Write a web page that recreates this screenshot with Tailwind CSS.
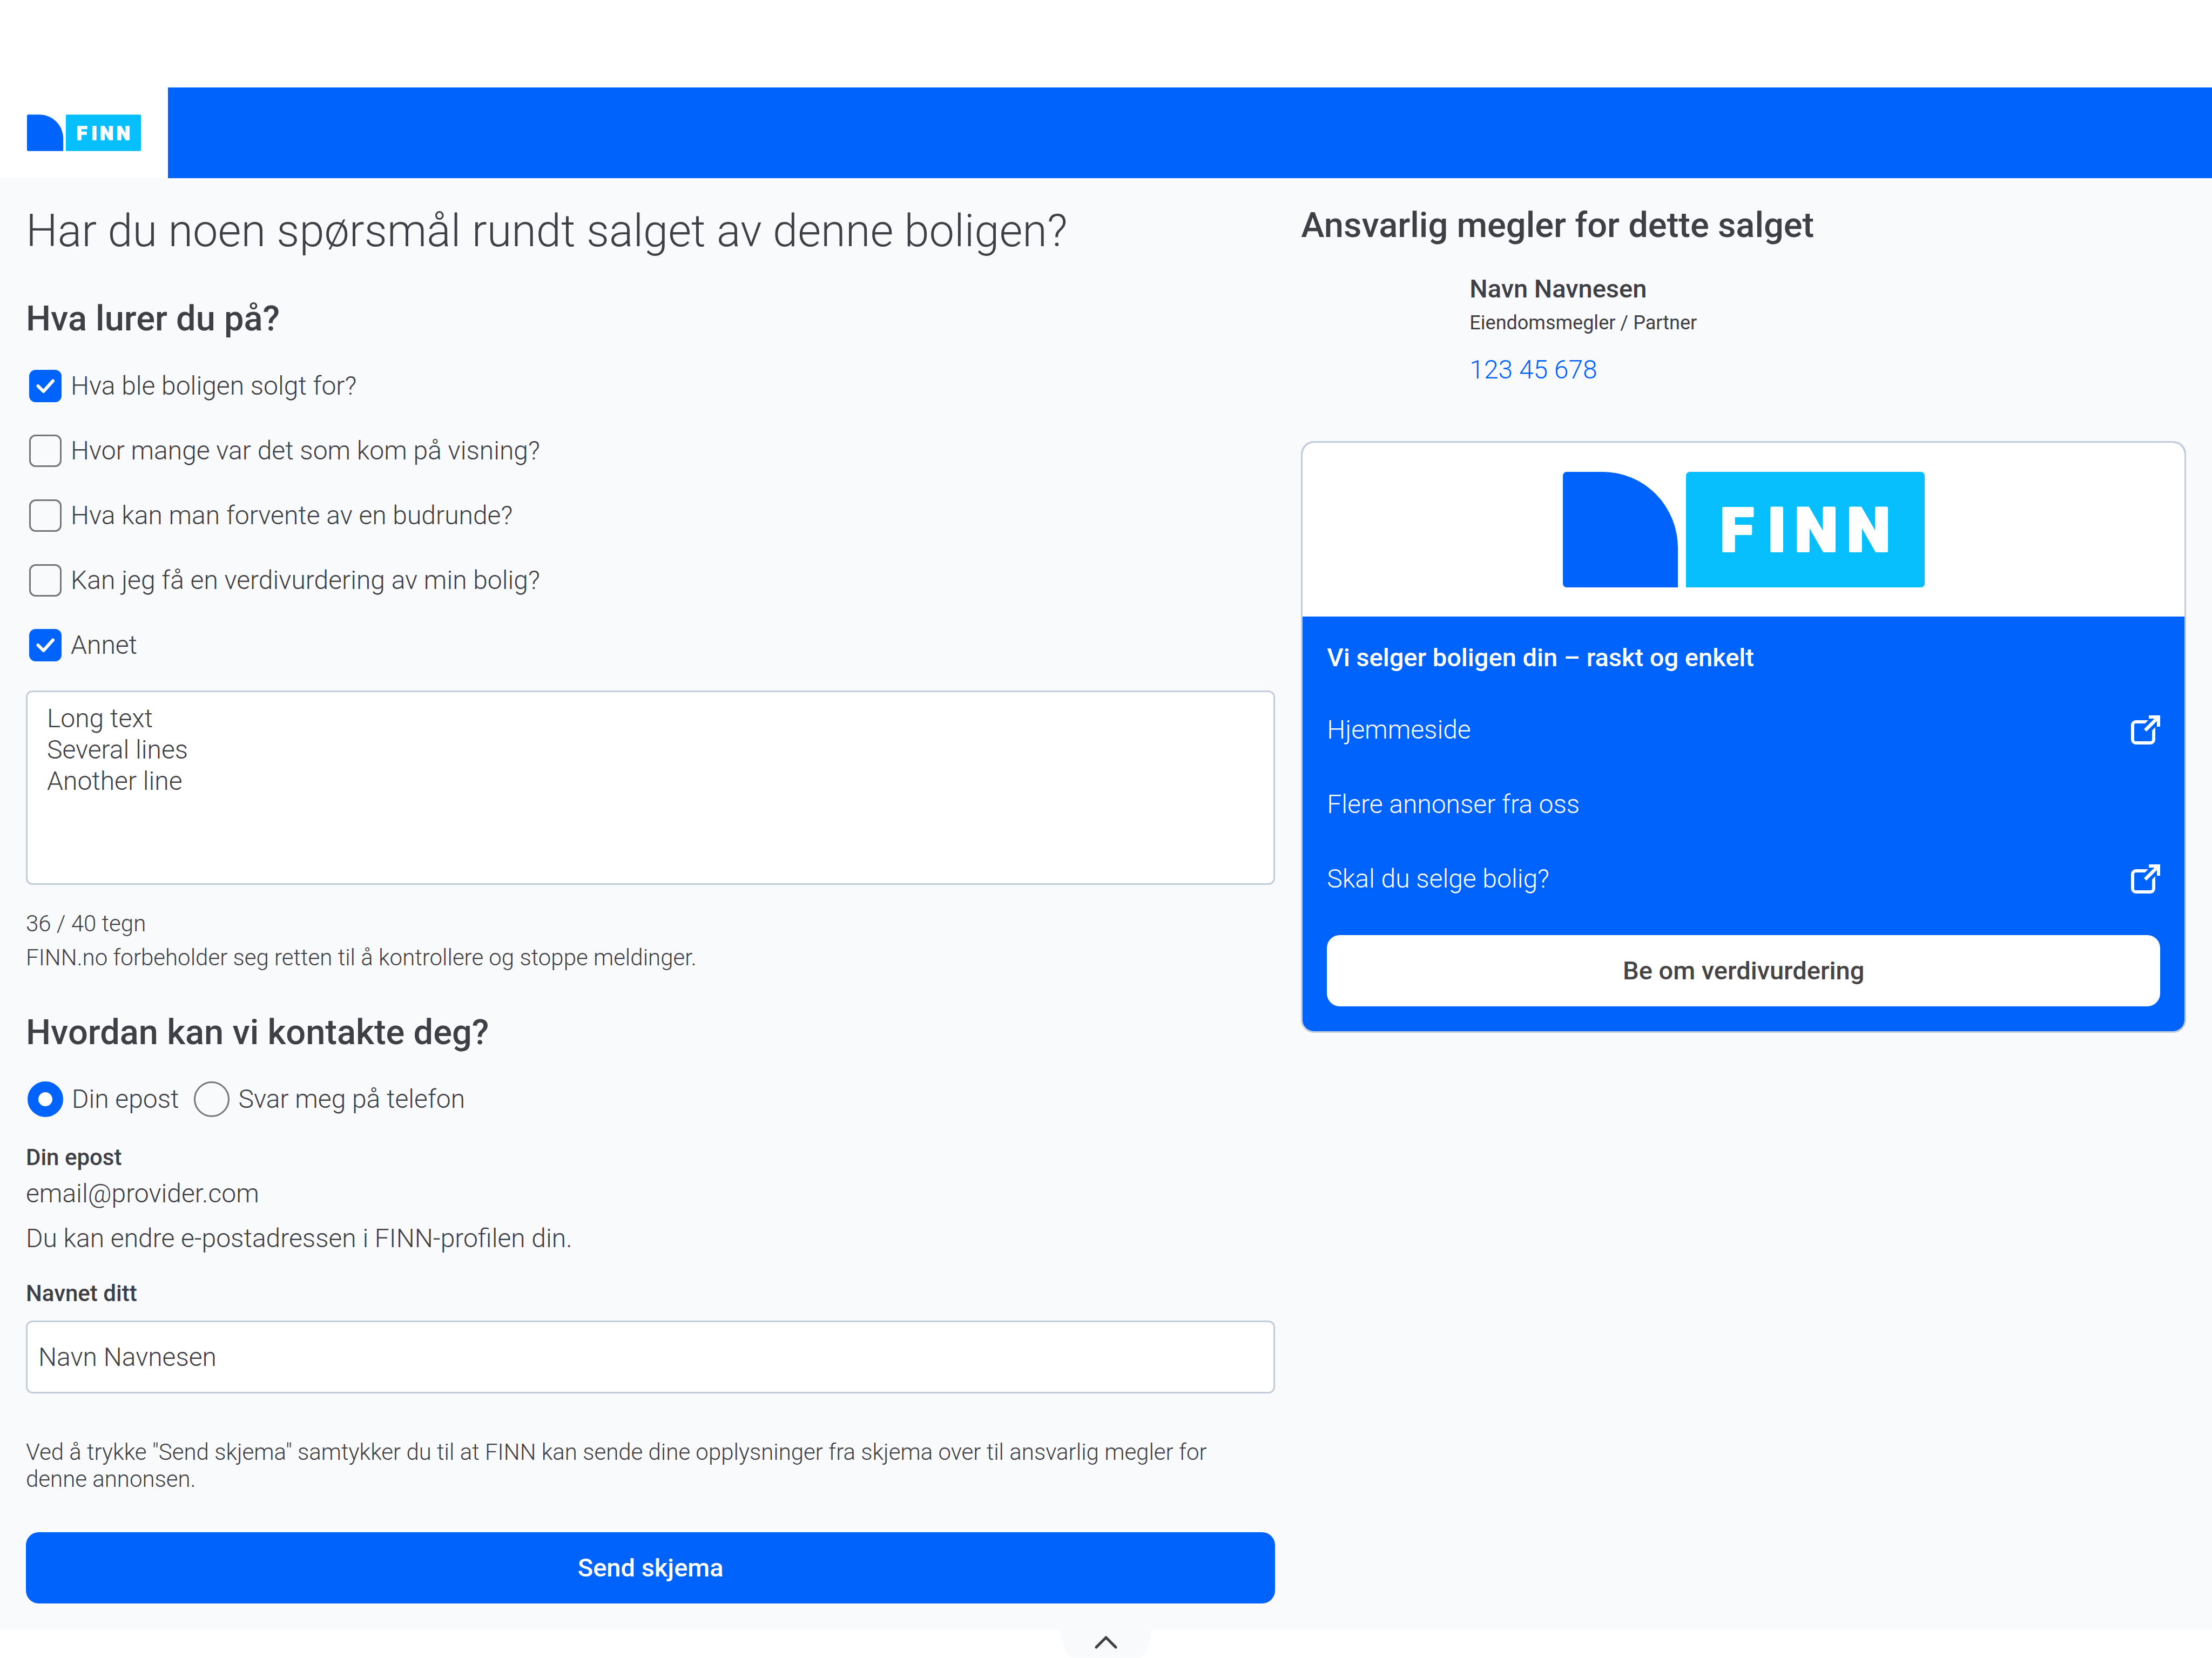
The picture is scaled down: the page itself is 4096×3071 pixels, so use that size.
<!DOCTYPE html>
<html lang="no">
<head>
<meta charset="utf-8">
<meta name="viewport" content="width=device-width, initial-scale=1">
<title>FINN – Kontakt megler</title>
<script src="https://cdn.jsdelivr.net/npm/@tailwindcss/browser@4"></script>
</head>
<body class="flex min-h-screen flex-col bg-white pt-[162px] font-['Roboto',sans-serif] text-[48px] leading-[72px] font-light text-[#3f4046]">

<svg class="hidden" aria-hidden="true">
  <symbol id="logo" viewBox="0 0 670 214">
    <path fill="#0063fb" d="M7 0H74A139 141 0 0 1 213 141V214H7A7 7 0 0 1 0 207V7A7 7 0 0 1 7 0Z"/>
    <path fill="#06bffc" d="M235 0H663A7 7 0 0 1 670 7V207A7 7 0 0 1 663 214H228V7A7 7 0 0 1 235 0Z"/>
    <text x="291 379 429 526" y="147" fill="#fff" stroke="#fff" stroke-width="4" stroke-linejoin="round" font-family="Roboto, sans-serif" font-weight="900" font-size="114">FINN</text>
  </symbol>
  <symbol id="external" viewBox="0 0 54 54">
    <path d="M32 9H9A9 9 0 0 0 0 18V45A9 9 0 0 0 9 54H36A9 9 0 0 0 45 45V22L39 28V45A3 3 0 0 1 36 48H9A3 3 0 0 1 6 45V18A3 3 0 0 1 9 15H26Z"/>
    <path d="M33 0H54V21H48V10.5L28.5 30L24 25.5L43.5 6H33Z"/>
  </symbol>
</svg>

<header class="flex h-[168px] bg-[#0063fb]">
  <a href="#" aria-label="FINN" class="flex items-center bg-white px-[50px]">
    <svg class="h-[68px] w-[211px]"><use href="#logo"/></svg>
  </a>
</header>

<main class="grid grid-cols-12 gap-12 bg-[#f9fafc] px-12 py-12">
  <form class="col-span-7 flex flex-col">
    <h1 class="text-[83px] leading-[100px]">Har du noen spørsmål rundt salget av denne boligen?</h1>

    <h2 class="mt-[73px] text-[65px] leading-[78px] font-medium">Hva lurer du på?</h2>
    <div class="mt-14 flex flex-col gap-15 pl-[6px] leading-[60px]">
      <label class="flex items-center gap-[17px]">
        <span class="relative flex">
          <input type="checkbox" checked class="peer size-15 appearance-none rounded-xl border-3 border-[#767676] checked:border-[#0063fb] checked:bg-[#0063fb]">
          <svg class="pointer-events-none absolute inset-0 hidden size-15 peer-checked:block" viewBox="0 0 60 60" fill="none" stroke="#fff" stroke-width="6" stroke-linecap="round" stroke-linejoin="round"><path d="M16.500 30L26.500 40L44 20.500"/></svg>
        </span>
        Hva ble boligen solgt for?
      </label>
      <label class="flex items-center gap-[17px]">
        <input type="checkbox" class="size-15 appearance-none rounded-xl border-3 border-[#767676]">
        Hvor mange var det som kom på visning?
      </label>
      <label class="flex items-center gap-[17px]">
        <input type="checkbox" class="size-15 appearance-none rounded-xl border-3 border-[#767676]">
        Hva kan man forvente av en budrunde?
      </label>
      <label class="flex items-center gap-[17px]">
        <input type="checkbox" class="size-15 appearance-none rounded-xl border-3 border-[#767676]">
        Kan jeg få en verdivurdering av min bolig?
      </label>
      <label class="flex items-center gap-[17px]">
        <span class="relative flex">
          <input type="checkbox" checked class="peer size-15 appearance-none rounded-xl border-3 border-[#767676] checked:border-[#0063fb] checked:bg-[#0063fb]">
          <svg class="pointer-events-none absolute inset-0 hidden size-15 peer-checked:block" viewBox="0 0 60 60" fill="none" stroke="#fff" stroke-width="6" stroke-linecap="round" stroke-linejoin="round"><path d="M16.500 30L26.500 40L44 20.500"/></svg>
        </span>
        Annet
      </label>
    </div>

    <textarea aria-label="Melding" class="mt-[54px] h-90 resize-none rounded-xl border-3 border-[#c3ccd9] bg-white px-9 py-5 leading-[58px]">Long text
Several lines
Another line</textarea>
    <p class="mt-10 text-[42px] leading-[63px]">36 / 40 tegn</p>
    <p class="text-[42px] leading-[63px]">FINN.no forbeholder seg retten til å kontrollere og stoppe meldinger.</p>

    <h2 class="mt-[68px] text-[65px] leading-[78px] font-medium">Hvordan kan vi kontakte deg?</h2>
    <div class="mt-13 flex gap-7 pl-[3px] leading-[66px]">
      <label class="flex items-center gap-4">
        <input type="radio" name="svar" checked class="size-[66px] appearance-none rounded-full border-3 border-[#767676] checked:border-20 checked:border-[#0063fb] checked:bg-white">
        Din epost
      </label>
      <label class="flex items-center gap-4">
        <input type="radio" name="svar" class="size-[66px] appearance-none rounded-full border-3 border-[#767676] checked:border-20 checked:border-[#0063fb] checked:bg-white">
        Svar meg på telefon
      </label>
    </div>

    <p class="mt-[43px] text-[42px] leading-[63px] font-medium">Din epost</p>
    <p>email@provider.com</p>
    <p class="mt-[11px]">Du kan endre e-postadressen i FINN-profilen din.</p>

    <label for="navn" class="mt-[34px] text-[42px] leading-[63px] font-medium">Navnet ditt</label>
    <input id="navn" type="text" value="Navn Navnesen" class="mt-[19px] h-[135px] rounded-xl border-3 border-[#c3ccd9] bg-white px-5">

    <p class="mt-21 pr-12 text-[42px] leading-[50px]">Ved å trykke "Send skjema" samtykker du til at FINN kan sende dine opplysninger fra skjema over til ansvarlig megler for denne annonsen.</p>
    <button type="button" class="mt-[73px] h-33 rounded-3xl bg-[#0063fb] text-[47px] font-medium text-white">Send skjema</button>
  </form>

  <aside class="col-span-5">
    <h2 class="text-[65px] leading-[78px] font-medium">Ansvarlig megler for dette salget</h2>
    <div class="mt-[43px] flex flex-col items-start pl-78">
      <h3 class="text-[47px] font-medium">Navn Navnesen</h3>
      <p class="text-[36px] leading-[54px] font-normal">Eiendomsmegler / Partner</p>
      <a href="#" class="mt-6 text-[#0063fb]">123 45 678</a>
    </div>

    <section class="mt-24 overflow-hidden rounded-3xl border-3 border-[#c3ccd9] bg-[#0063fb] text-white">
      <div class="flex justify-center bg-white py-[54px]">
        <svg class="h-[214px] w-[670px]" role="img" aria-label="FINN"><use href="#logo"/></svg>
      </div>
      <div class="flex flex-col px-[45px] pt-10 pb-[46px]">
        <h3 class="text-[47px] font-medium">Vi selger boligen din – raskt og enkelt</h3>
        <nav class="mt-[71px] flex flex-col gap-21 leading-[54px]">
          <a href="#" class="flex items-center justify-between">Hjemmeside<svg class="size-[54px] fill-current"><use href="#external"/></svg></a>
          <a href="#" class="flex items-center justify-between">Flere annonser fra oss</a>
          <a href="#" class="flex items-center justify-between">Skal du selge bolig?<svg class="size-[54px] fill-current"><use href="#external"/></svg></a>
        </nav>
        <button type="button" class="mt-[77px] h-33 rounded-3xl bg-white text-[47px] font-medium text-[#474445]">Be om verdivurdering</button>
      </div>
    </section>
  </aside>
</main>

<footer class="flex h-13 justify-center overflow-hidden bg-white">
  <button type="button" aria-label="Til toppen" class="flex h-21 w-42 justify-center rounded-b-full bg-[#f9fafc] pt-3">
    <svg class="h-6 w-[42px]" viewBox="0 0 42 24" fill="none" stroke="#3f4046" stroke-width="5" stroke-linecap="round" stroke-linejoin="round"><path d="M3 21L21 3L39 21"/></svg>
  </button>
</footer>
</body>
</html>
